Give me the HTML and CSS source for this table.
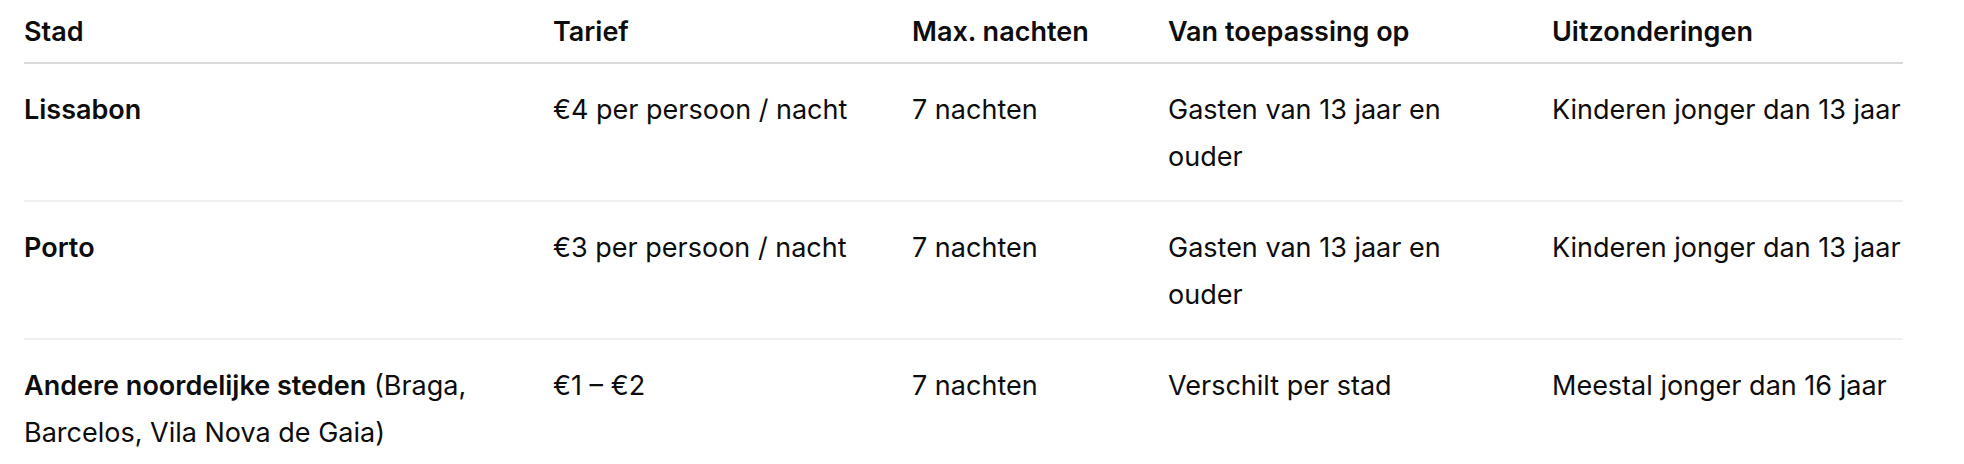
FILE: index.html
```html
<!DOCTYPE html>
<html lang="nl">
<head>
<meta charset="utf-8">
<title>Toeristenbelasting</title>
<link rel="stylesheet" href="styles.css">
</head>
<body>
<div class="wrap">
<table class="tax">
  <colgroup>
    <col class="c1"><col class="c2"><col class="c3"><col class="c4"><col class="c5">
  </colgroup>
  <thead>
    <tr>
      <th>Stad</th>
      <th>Tarief</th>
      <th>Max. nachten</th>
      <th>Van toepassing op</th>
      <th>Uitzonderingen</th>
    </tr>
  </thead>
  <tbody>
    <tr>
      <td><strong>Lissabon</strong></td>
      <td>€4 per persoon / nacht</td>
      <td>7 nachten</td>
      <td>Gasten van 13 jaar en ouder</td>
      <td>Kinderen jonger dan 13 jaar</td>
    </tr>
    <tr>
      <td><strong>Porto</strong></td>
      <td>€3 per persoon / nacht</td>
      <td>7 nachten</td>
      <td>Gasten van 13 jaar en ouder</td>
      <td>Kinderen jonger dan 13 jaar</td>
    </tr>
    <tr>
      <td><strong>Andere noordelijke steden</strong> (Braga, Barcelos, Vila Nova de Gaia)</td>
      <td>€1 – €2</td>
      <td>7 nachten</td>
      <td>Verschilt per stad</td>
      <td>Meestal jonger dan 16 jaar</td>
    </tr>
  </tbody>
</table>
</div>
</body>
</html>
```

FILE: styles.css
```css
html, body {
  margin: 0;
  padding: 0;
  background: #ffffff;
}

body {
  font-family: Inter, "Noto Sans", "Liberation Sans", sans-serif;
  font-size: 27px;
  line-height: 47px;
  color: #0d0d0d;
}

.wrap {
  padding: 8px 0 0 24px;
}

.tax {
  width: 1879px;
  table-layout: fixed;
  border-collapse: collapse;
  border-spacing: 0;
}

.c1 { width: 529px; }
.c2 { width: 359px; }
.c3 { width: 256px; }
.c4 { width: 384px; }
.c5 { width: 351px; }

.tax th {
  text-align: left;
  font-weight: 600;
  vertical-align: bottom;
  padding: 0 40px 7px 0;
  border-bottom: 2px solid #d9d9d9;
}

.tax td {
  text-align: left;
  vertical-align: top;
  padding: 22px 40px 20px 0;
  border-bottom: 2px solid #f0f0f0;
}

.tax th:last-child,
.tax td:last-child {
  padding-right: 0;
}

.tax strong {
  font-weight: 600;
}
```
